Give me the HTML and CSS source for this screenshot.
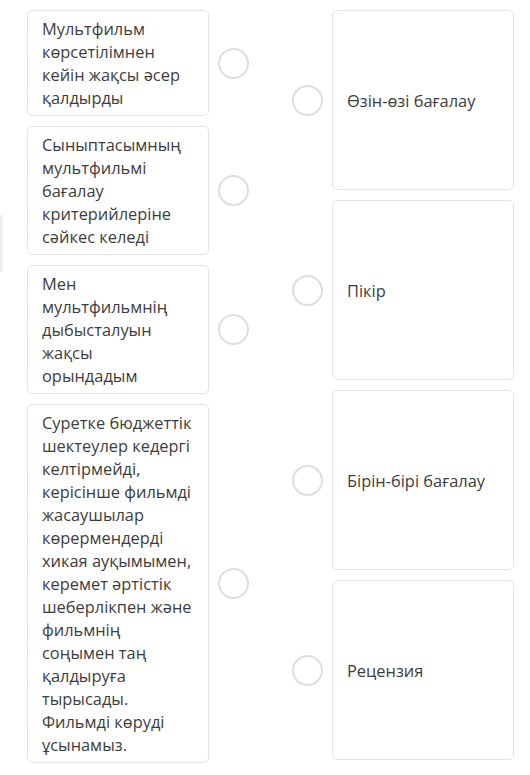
FILE: index.html
```html
<!DOCTYPE html>
<html lang="kk">
<head>
  <meta charset="UTF-8">
  <title>Сәйкестендіру</title>
  <link rel="stylesheet" href="styles.css">
</head>
<body>

  <div class="edge"></div>

  <div class="match">
    <div class="col left">
      <div class="row">
        <div class="card">Мультфильм көрсетілімнен кейін жақсы әсер қалдырды</div>
        <span class="dot"></span>
      </div>
      <div class="row">
        <div class="card">Сыныптасымның мультфильмі бағалау критерийлеріне сәйкес келеді</div>
        <span class="dot"></span>
      </div>
      <div class="row">
        <div class="card">Мен мультфильмнің дыбысталуын жақсы орындадым</div>
        <span class="dot"></span>
      </div>
      <div class="row">
        <div class="card">Суретке бюджеттік шектеулер кедергі келтірмейді, керісінше фильмді жасаушылар көрермендерді хикая ауқымымен, керемет әртістік шеберлікпен және фильмнің соңымен таң қалдыруға тырысады. Фильмді көруді ұсынамыз.</div>
        <span class="dot"></span>
      </div>
    </div>

    <div class="col right">
      <div class="row">
        <span class="dot"></span>
        <div class="card big">Өзін-өзі бағалау</div>
      </div>
      <div class="row">
        <span class="dot"></span>
        <div class="card big">Пікір</div>
      </div>
      <div class="row">
        <span class="dot"></span>
        <div class="card big">Бірін-бірі бағалау</div>
      </div>
      <div class="row">
        <span class="dot"></span>
        <div class="card big">Рецензия</div>
      </div>
    </div>
  </div>

</body>
</html>
```

FILE: styles.css
```css
body {
  margin: 0;
  background: #fff;
  font-family: 'Open Sans', 'Noto Sans', sans-serif;
  color: #3d3d3d;
}

.edge {
  position: absolute;
  left: 0;
  top: 215px;
  width: 3px;
  height: 57px;
  background: #f1f1f1;
}

.match {
  display: flex;
  padding: 10px 0 0 27px;
}

.col {
  display: flex;
  flex-direction: column;
  gap: 10px;
}

.row {
  display: flex;
  align-items: center;
}

.card {
  box-sizing: border-box;
  width: 182px;
  border: 1px solid #e3e3e3;
  border-radius: 5px;
  padding: 6px 16px 6px 14px;
  font-size: 16.4px;
  line-height: 23px;
}

.card.big {
  height: 180px;
  display: flex;
  align-items: center;
}

.dot {
  box-sizing: border-box;
  width: 31px;
  height: 31px;
  border: 2px solid #dedede;
  border-radius: 50%;
}

.left .dot {
  margin-left: 9px;
}

.right {
  margin-left: 43px;
}

.right .dot {
  margin-right: 9px;
}
```
